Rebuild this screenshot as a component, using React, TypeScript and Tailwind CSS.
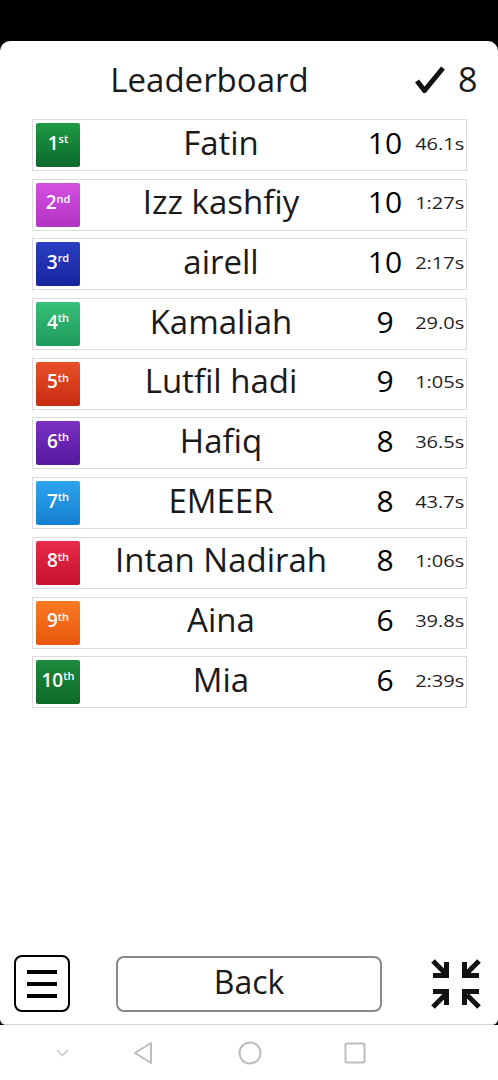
import React from 'react';

interface Entry {
  rank: number;
  suffix: string;
  name: string;
  score: number;
  time: string;
  badge: string;
}

const entries: Entry[] = [
  { rank: 1, suffix: 'st', name: 'Fatin', score: 10, time: '46.1', badge: 'bg-gradient-to-b from-[#1f9a45] to-[#0b6a2b]' },
  { rank: 2, suffix: 'nd', name: 'Izz kashfiy', score: 10, time: '1:27', badge: 'bg-gradient-to-b from-[#d44fe0] to-[#b132c4]' },
  { rank: 3, suffix: 'rd', name: 'airell', score: 10, time: '2:17', badge: 'bg-gradient-to-b from-[#2a3fc4] to-[#16259e]' },
  { rank: 4, suffix: 'th', name: 'Kamaliah', score: 9, time: '29.0', badge: 'bg-gradient-to-b from-[#37c07a] to-[#1e9a5a]' },
  { rank: 5, suffix: 'th', name: 'Lutfil hadi', score: 9, time: '1:05', badge: 'bg-gradient-to-b from-[#e8502a] to-[#c92a10]' },
  { rank: 6, suffix: 'th', name: 'Hafiq', score: 8, time: '36.5', badge: 'bg-gradient-to-b from-[#7a30c4] to-[#55189e]' },
  { rank: 7, suffix: 'th', name: 'EMEER', score: 8, time: '43.7', badge: 'bg-gradient-to-b from-[#2ea4ee] to-[#1580d2]' },
  { rank: 8, suffix: 'th', name: 'Intan Nadirah', score: 8, time: '1:06', badge: 'bg-gradient-to-b from-[#ea2a4a] to-[#c5102e]' },
  { rank: 9, suffix: 'th', name: 'Aina', score: 6, time: '39.8', badge: 'bg-gradient-to-b from-[#fa7a22] to-[#e8560c]' },
  { rank: 10, suffix: 'th', name: 'Mia', score: 6, time: '2:39', badge: 'bg-gradient-to-b from-[#1c8a3c] to-[#0e6a28]' },
];

const font = { fontFamily: '"Open Sans", "Noto Sans", sans-serif' };

function Row({ e }: { e: Entry }) {
  return (
    <div className="h-[52px] border border-[#dcdcdc] flex items-center pl-[3px] pr-[2px]">
      <div
        className={`w-[44px] h-[44px] shrink-0 rounded-[2px] flex items-center justify-center text-white pb-[4px] ${e.badge}`}
      >
        <span className="text-[19px] font-semibold leading-none">{e.rank}</span>
        <span className="text-[11px] font-semibold leading-none -mt-[9px]">{e.suffix}</span>
      </div>
      <div className="flex-1 text-center text-[33px] leading-none text-[#1a1a1a] whitespace-nowrap pb-[6px]">{e.name}</div>
      <div className="w-[46px] text-center text-[30px] leading-none text-black pb-[5px]">{e.score}</div>
      <div className="w-[56px] flex justify-end pb-[3px]">
        <span className="inline-block origin-right scale-x-[1.25] text-[16px] leading-none text-[#1e1e1e]">
          {e.time}s
        </span>
      </div>
    </div>
  );
}

function CompressIcon() {
  return (
    <svg width="50" height="50" viewBox="0 0 50 50" fill="none" stroke="#111" strokeWidth="5">
      <path d="M2 2 L14 14 M15.5 3 V16.5 H2" />
      <path d="M48 2 L36 14 M33.5 3 V16.5 H48" />
      <path d="M2 48 L14 36 M2 32.5 H15.5 V46" />
      <path d="M48 48 L36 36 M48 32.5 H33.5 V46" />
    </svg>
  );
}

export default function App() {
  return (
    <div className="w-[498px] h-[1080px] bg-black flex flex-col overflow-hidden" style={font}>
      <div className="h-[41px] shrink-0" />
      <div className="flex-1 bg-white rounded-t-[10px] rounded-b-[6px] border-b border-[#d4d4d4] flex flex-col">
        <div className="h-[78px] shrink-0 flex items-center pb-[2px]">
          <div className="w-[419px] text-center text-[33px] font-medium text-[#1a1a1a] leading-none">Leaderboard</div>
          <div className="-ml-[4px] flex items-center gap-[13px]">
            <svg width="30" height="28" viewBox="0 0 30 28">
              <path d="M2 16 L9.5 25.5 L28 3" fill="none" stroke="#111" strokeWidth="5" strokeLinejoin="miter" />
            </svg>
            <span className="text-[34px] leading-none text-[#1a1a1a]">8</span>
          </div>
        </div>
        <div className="px-[32px] pr-[31px] flex flex-col gap-[7.7px]">
          {entries.map((e) => (
            <Row key={e.rank} e={e} />
          ))}
        </div>
        <div className="flex-1" />
        <div className="flex items-center pl-[14px] pr-[17px] mb-[12px]">
          <div className="w-[56px] h-[57px] border-[2.5px] border-black rounded-[8px] flex flex-col items-center justify-center gap-[8px]">
            <div className="w-[30px] h-[4px] bg-black" />
            <div className="w-[30px] h-[4px] bg-black" />
            <div className="w-[30px] h-[4px] bg-black" />
          </div>
          <button className="ml-[46px] w-[266px] h-[56px] border-2 border-[#8a8a8a] rounded-[8px] text-[32px] font-medium text-[#1a1a1a] leading-none pb-[3px]">
            Back
          </button>
          <div className="ml-auto">
            <CompressIcon />
          </div>
        </div>
      </div>
      <div className="h-[55px] shrink-0 bg-white flex items-center">
        <div className="w-full flex items-center">
          <svg className="ml-[56px]" width="13" height="8" viewBox="0 0 13 8" fill="none" stroke="#c4c4c4" strokeWidth="1.5">
            <path d="M1 1 L6.5 6.5 L12 1" />
          </svg>
          <svg className="ml-[63px]" width="22" height="24" viewBox="0 0 22 24" fill="none" stroke="#bdbdbd" strokeWidth="2" strokeLinejoin="round">
            <path d="M19 2 L3 12 L19 22 Z" />
          </svg>
          <svg className="ml-[84px]" width="24" height="24" viewBox="0 0 24 24" fill="none" stroke="#bdbdbd" strokeWidth="2">
            <circle cx="12" cy="12" r="10.5" />
          </svg>
          <svg className="ml-[82px]" width="22" height="22" viewBox="0 0 22 22" fill="none" stroke="#bdbdbd" strokeWidth="2">
            <rect x="1.5" y="1.5" width="19" height="19" rx="1.5" />
          </svg>
        </div>
      </div>
    </div>
  );
}
